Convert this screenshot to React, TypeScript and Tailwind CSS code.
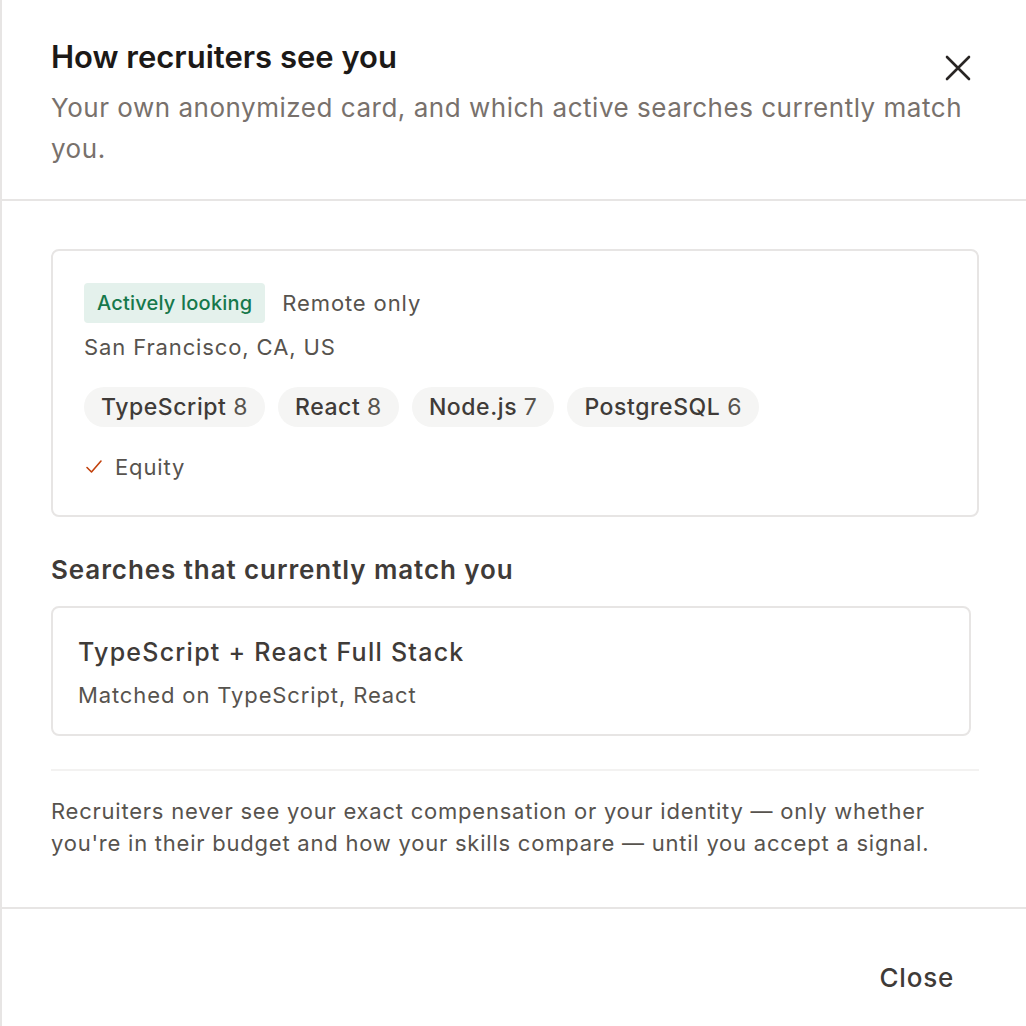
const skills = [
  { name: "TypeScript", level: 8 },
  { name: "React", level: 8 },
  { name: "Node.js", level: 7 },
  { name: "PostgreSQL", level: 6 },
];

export default function App() {
  return (
    <div className="min-h-[1026px] w-full bg-white font-['Inter',sans-serif] text-[#44403c]">
      <div className="min-h-[1026px] border-l-2 border-[#e7e5e4] bg-white">
        {/* header */}
        <div className="relative border-b-2 border-[#e7e5e4] pl-[49px] pr-[60px] pt-[38px] pb-[30px]">
          <h2 className="text-[31px] font-semibold leading-[38px] text-[#1c1917]">
            How recruiters see you
          </h2>
          <p className="mt-[11px] text-[26px] leading-[41px] tracking-[0.02em] text-[#78716c]">
            Your own anonymized card, and which active searches currently match you.
          </p>
          <button className="absolute right-[55px] top-[55px] text-[#292524]">
            <svg width="26" height="26" viewBox="0 0 26 26" fill="none" stroke="currentColor" strokeWidth="2.6" strokeLinecap="round">
              <path d="M2 2l22 22M24 2L2 24" />
            </svg>
          </button>
        </div>

        {/* body */}
        <div className="pl-[49px] pr-[47px] pt-[48px] pb-[48px]">
          <div className="rounded-[8px] border-2 border-[#e7e5e4] px-[31px] pt-[32px] pb-[32px]">
            <div className="flex items-center gap-[17px]">
              <span className="rounded-[4px] bg-[#e4f1ec] px-[13px] text-[20px] font-medium leading-[40px] tracking-[0.01em] text-[#16784b]">
                Actively looking
              </span>
              <span className="text-[22px] tracking-[0.04em] text-[#57534e]">Remote only</span>
            </div>
            <div className="mt-[8px] text-[22px] leading-[32px] tracking-[0.04em] text-[#57534e]">
              San Francisco, CA, US
            </div>
            <div className="mt-[24px] flex flex-wrap gap-[13px]">
              {skills.map((s) => (
                <span
                  key={s.name}
                  className="rounded-full bg-[#f5f5f4] px-[17px] text-[23px] font-medium leading-[40px] tracking-[0.025em] text-[#3f3b38]"
                >
                  {s.name} <span className="font-normal text-[#57534e]">{s.level}</span>
                </span>
              ))}
            </div>
            <div className="mt-[24px] flex items-center gap-[11px] text-[22px] leading-[32px] tracking-[0.04em] text-[#57534e]">
              <svg width="20" height="20" viewBox="0 0 20 20" fill="none" stroke="#c2410c" strokeWidth="1.6" strokeLinecap="round" strokeLinejoin="round">
                <path d="M3 10.5l4.5 4.5L17 4" />
              </svg>
              Equity
            </div>
          </div>

          <h3 className="mt-[36px] text-[26px] font-semibold leading-[34px] tracking-[0.035em] text-[#3f3b38]">
            Searches that currently match you
          </h3>
          <div className="mt-[19px] mr-[8px] rounded-[8px] border-2 border-[#e7e5e4] px-[25px] pt-[26px] pb-[24px]">
            <div className="text-[25px] font-medium leading-[36px] tracking-[0.05em] text-[#3f3b38]">
              TypeScript + React Full Stack
            </div>
            <div className="mt-[10px] text-[22px] leading-[30px] tracking-[0.04em] text-[#57534e]">
              Matched on TypeScript, React
            </div>
          </div>

          <div className="mt-[33px] border-t-2 border-[#f3f2f1] pt-[24px] text-[22px] leading-[32px] tracking-[0.035em] text-[#57534e]">
            Recruiters never see your exact compensation or your identity — only whether you're in their budget
            and how your skills compare — until you accept a signal.
          </div>
        </div>

        {/* footer */}
        <div className="flex justify-end border-t-2 border-[#e7e5e4] pr-[72px] pt-[52px]">
          <button className="text-[26px] font-medium leading-[34px] tracking-[0.03em] text-[#3f3b38]">Close</button>
        </div>
      </div>
    </div>
  );
}
